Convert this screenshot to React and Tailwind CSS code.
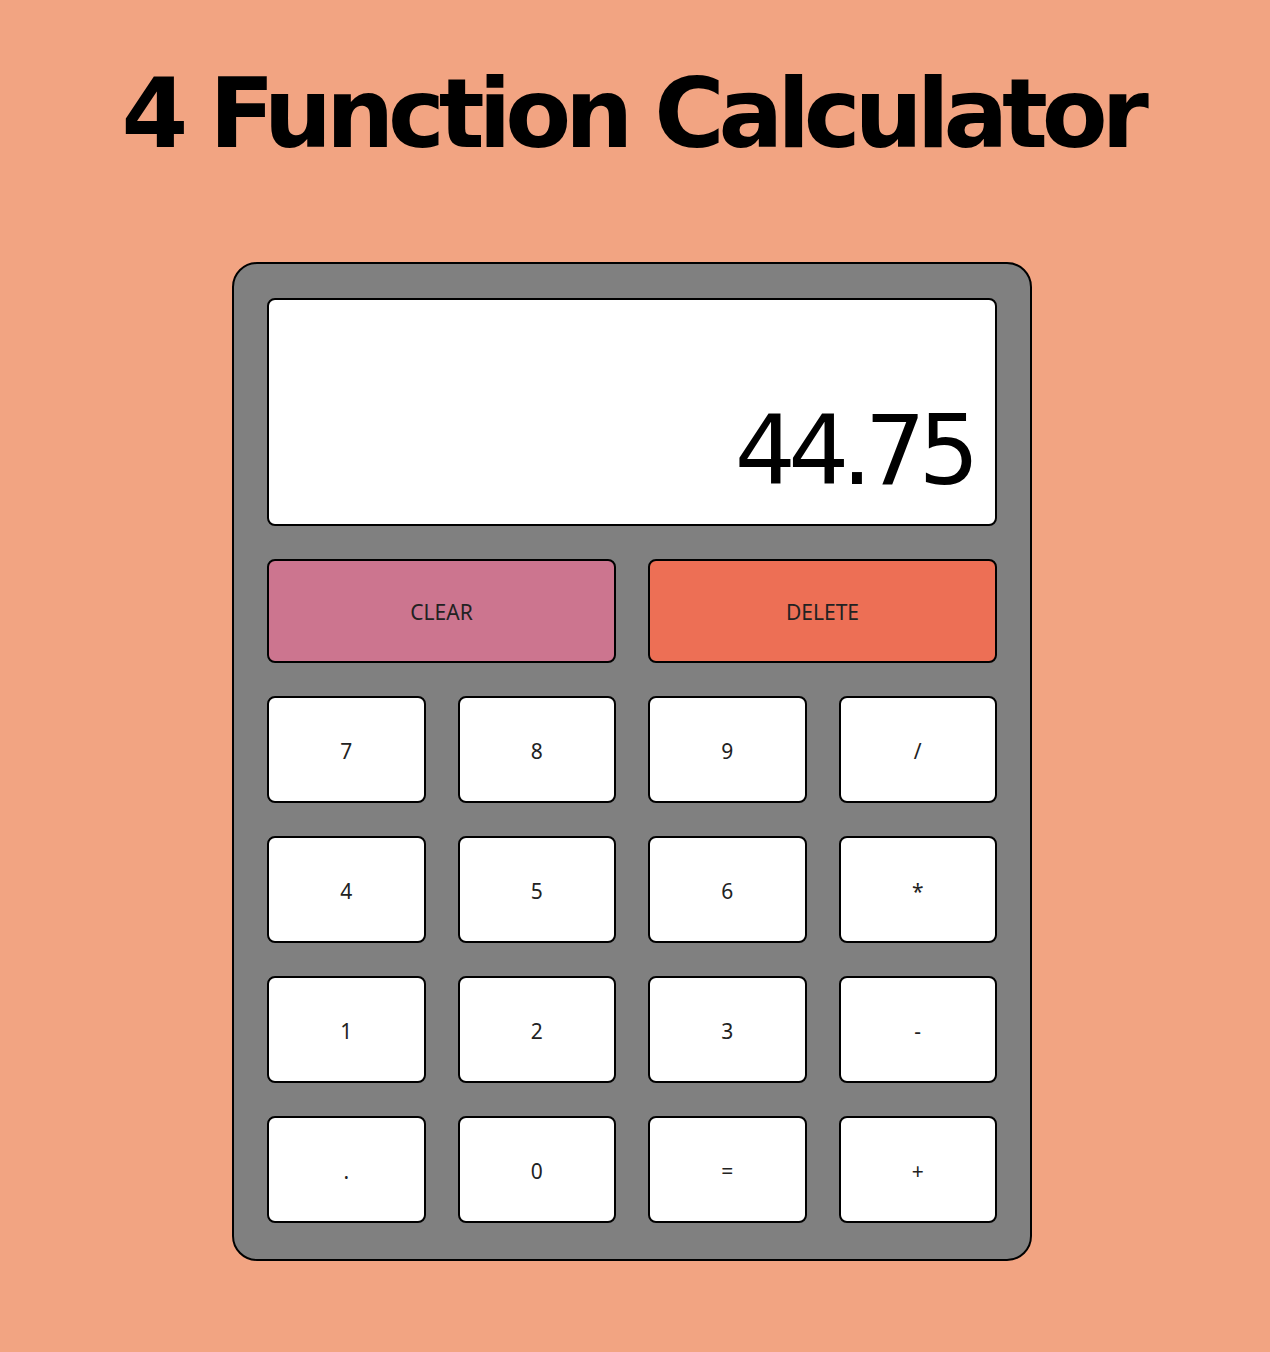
const keys = ["7", "8", "9", "/", "4", "5", "6", "*", "1", "2", "3", "-", ".", "0", "=", "+"];

export default function App() {
  return (
    <div className="w-full min-h-screen bg-[#f2a482] flex flex-col items-center pt-[58px] pb-[91px] pr-[6px] font-['DejaVu_Sans',sans-serif]">
      <h1 className="text-[96px]/[112px] font-bold text-black tracking-[-6.2px] whitespace-nowrap">
        4 Function Calculator
      </h1>

      {/* Calculator body */}
      <div className="box-border w-[800px] mt-[92px] bg-[#808080] border-2 border-black rounded-[25px] pt-[34px] px-[33px] pb-[36px] flex flex-col gap-[33px]">
        <div className="box-border h-[228px] bg-white border-2 border-black rounded-lg flex justify-end items-end pr-[23px] pb-[17px]">
          <span className="text-[96px]/[112px] text-black tracking-[-7.5px]">44.75</span>
        </div>

        <div className="grid grid-cols-2 gap-8">
          <button
            type="button"
            className="box-border h-[104px] pt-1 bg-[#cc758f] border-2 border-black rounded-lg text-[21px] text-[#222] font-['Noto_Sans',sans-serif]"
          >
            CLEAR
          </button>
          <button
            type="button"
            className="box-border h-[104px] pt-1 bg-[#ed6f55] border-2 border-black rounded-lg text-[21px] text-[#222] font-['Noto_Sans',sans-serif]"
          >
            DELETE
          </button>
        </div>

        <div className="grid grid-cols-4 gap-x-8 gap-y-[33px]">
          {keys.map((k) => (
            <button
              key={k}
              type="button"
              className="box-border h-[107px] pt-1 bg-white border-2 border-black rounded-lg text-[21px] text-[#222] font-['Noto_Sans',sans-serif]"
            >
              {k}
            </button>
          ))}
        </div>
      </div>
    </div>
  );
}
